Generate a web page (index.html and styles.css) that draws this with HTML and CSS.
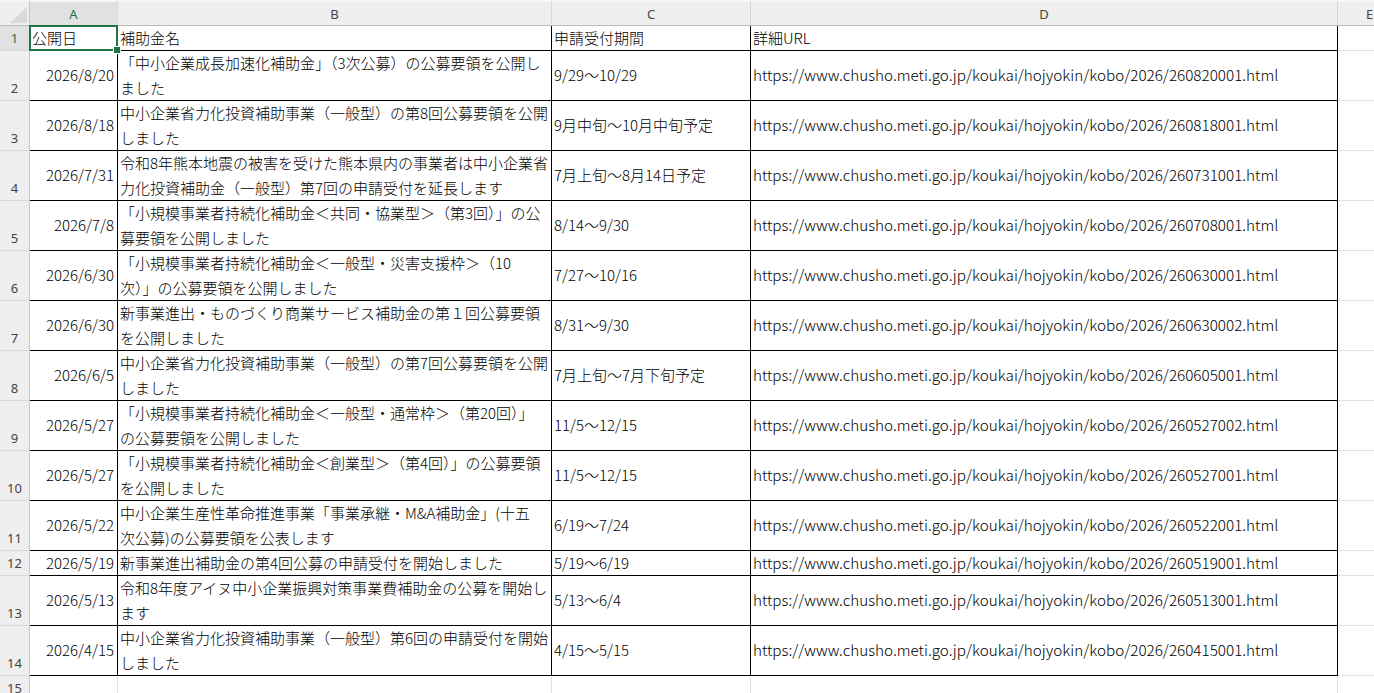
FILE: index.html
```html
<!DOCTYPE html>
<html lang="ja">

<head>
  <meta charset="UTF-8">
  <meta name="viewport" content="width=device-width, initial-scale=1.0">
  <title>補助金公募一覧</title>
  <link rel="stylesheet" href="styles.css">
</head>

<body>
  <div class="sheet">
    <!-- column headers -->
    <div class="hd corner">
      <svg class="corner-tri" width="30" height="26" viewBox="0 0 30 26"><polygon points="10,23 27,23 27,7" fill="#dadada"/></svg>
    </div>
    <div class="hd col sel-col">A</div>
    <div class="hd col">B</div>
    <div class="hd col">C</div>
    <div class="hd col">D</div>
    <div class="hd col">E</div>

    <!-- row 1 -->
    <div class="rh sel-row">1</div>
    <div class="c t a1">公開日<span class="handle"></span></div>
    <div class="c t">補助金名</div>
    <div class="c t">申請受付期間</div>
    <div class="c t">詳細URL</div>
    <div class="c"></div>

    <div class="rh">2</div>
    <div class="c t num">2026/8/20</div>
    <div class="c t wrap">「中小企業成長加速化補助金」（3次公募）の公募要領を公開し<br>ました</div>
    <div class="c t">9/29～10/29</div>
    <div class="c t url">https://www.chusho.meti.go.jp/koukai/hojyokin/kobo/2026/260820001.html</div>
    <div class="c"></div>

    <div class="rh">3</div>
    <div class="c t num">2026/8/18</div>
    <div class="c t wrap">中小企業省力化投資補助事業（一般型）の第8回公募要領を公開<br>しました</div>
    <div class="c t">9月中旬～10月中旬予定</div>
    <div class="c t url">https://www.chusho.meti.go.jp/koukai/hojyokin/kobo/2026/260818001.html</div>
    <div class="c"></div>

    <div class="rh">4</div>
    <div class="c t num">2026/7/31</div>
    <div class="c t wrap">令和8年熊本地震の被害を受けた熊本県内の事業者は中小企業省<br>力化投資補助金（一般型）第7回の申請受付を延長します</div>
    <div class="c t">7月上旬～8月14日予定</div>
    <div class="c t url">https://www.chusho.meti.go.jp/koukai/hojyokin/kobo/2026/260731001.html</div>
    <div class="c"></div>

    <div class="rh">5</div>
    <div class="c t num">2026/7/8</div>
    <div class="c t wrap">「小規模事業者持続化補助金＜共同・協業型＞（第3回）」の公<br>募要領を公開しました</div>
    <div class="c t">8/14～9/30</div>
    <div class="c t url">https://www.chusho.meti.go.jp/koukai/hojyokin/kobo/2026/260708001.html</div>
    <div class="c"></div>

    <div class="rh">6</div>
    <div class="c t num">2026/6/30</div>
    <div class="c t wrap">「小規模事業者持続化補助金＜一般型・災害支援枠＞（10<br>次）」の公募要領を公開しました</div>
    <div class="c t">7/27～10/16</div>
    <div class="c t url">https://www.chusho.meti.go.jp/koukai/hojyokin/kobo/2026/260630001.html</div>
    <div class="c"></div>

    <div class="rh">7</div>
    <div class="c t num">2026/6/30</div>
    <div class="c t wrap">新事業進出・ものづくり商業サービス補助金の第１回公募要領<br>を公開しました</div>
    <div class="c t">8/31～9/30</div>
    <div class="c t url">https://www.chusho.meti.go.jp/koukai/hojyokin/kobo/2026/260630002.html</div>
    <div class="c"></div>

    <div class="rh">8</div>
    <div class="c t num">2026/6/5</div>
    <div class="c t wrap">中小企業省力化投資補助事業（一般型）の第7回公募要領を公開<br>しました</div>
    <div class="c t">7月上旬～7月下旬予定</div>
    <div class="c t url">https://www.chusho.meti.go.jp/koukai/hojyokin/kobo/2026/260605001.html</div>
    <div class="c"></div>

    <div class="rh">9</div>
    <div class="c t num">2026/5/27</div>
    <div class="c t wrap">「小規模事業者持続化補助金＜一般型・通常枠＞（第20回）」<br>の公募要領を公開しました</div>
    <div class="c t">11/5～12/15</div>
    <div class="c t url">https://www.chusho.meti.go.jp/koukai/hojyokin/kobo/2026/260527002.html</div>
    <div class="c"></div>

    <div class="rh">10</div>
    <div class="c t num">2026/5/27</div>
    <div class="c t wrap">「小規模事業者持続化補助金＜創業型＞（第4回）」の公募要領<br>を公開しました</div>
    <div class="c t">11/5～12/15</div>
    <div class="c t url">https://www.chusho.meti.go.jp/koukai/hojyokin/kobo/2026/260527001.html</div>
    <div class="c"></div>

    <div class="rh">11</div>
    <div class="c t num">2026/5/22</div>
    <div class="c t wrap">中小企業生産性革命推進事業「事業承継・M&amp;A補助金」(十五<br>次公募)の公募要領を公表します</div>
    <div class="c t">6/19～7/24</div>
    <div class="c t url">https://www.chusho.meti.go.jp/koukai/hojyokin/kobo/2026/260522001.html</div>
    <div class="c"></div>

    <div class="rh">12</div>
    <div class="c t num">2026/5/19</div>
    <div class="c t">新事業進出補助金の第4回公募の申請受付を開始しました</div>
    <div class="c t">5/19～6/19</div>
    <div class="c t url">https://www.chusho.meti.go.jp/koukai/hojyokin/kobo/2026/260519001.html</div>
    <div class="c"></div>

    <div class="rh">13</div>
    <div class="c t num">2026/5/13</div>
    <div class="c t wrap">令和8年度アイヌ中小企業振興対策事業費補助金の公募を開始し<br>ます</div>
    <div class="c t">5/13～6/4</div>
    <div class="c t url">https://www.chusho.meti.go.jp/koukai/hojyokin/kobo/2026/260513001.html</div>
    <div class="c"></div>

    <div class="rh">14</div>
    <div class="c t num">2026/4/15</div>
    <div class="c t wrap">中小企業省力化投資補助事業（一般型）第6回の申請受付を開始<br>しました</div>
    <div class="c t">4/15～5/15</div>
    <div class="c t url">https://www.chusho.meti.go.jp/koukai/hojyokin/kobo/2026/260415001.html</div>
    <div class="c"></div>

    <div class="rh">15</div>
    <div class="c"></div>
    <div class="c"></div>
    <div class="c"></div>
    <div class="c"></div>
    <div class="c"></div>
  </div>
</body>

</html>
```

FILE: styles.css
```css
html, body {
  margin: 0;
  padding: 0;
  background: #ffffff;
  overflow: hidden;
}

body {
  font-family: "Noto Sans CJK JP", "Noto Sans", sans-serif;
  font-size: 15px;
  font-weight: 300;
  color: #000;
}

/* header row, row 1, rows 2-11, row 12, rows 13-14, row 15 */
.sheet {
  display: grid;
  grid-template-columns: 30px 88px 434px 199px 587px 64px;
  grid-template-rows: 26px 25px repeat(10, 50px) 25px 50px 50px 25px;
  width: 1402px;
}

/* header strip */
.hd {
  box-sizing: border-box;
  background: #efefef;
  border-top: 2px solid #f7f7f7;
  border-bottom: 1px solid #b9b9b9;
  border-right: 1px solid #d6d6d6;
}

.corner {
  position: relative;
  border-right: 1px solid #c6c6c6;
}

.corner-tri {
  position: absolute;
  left: 0;
  top: -2px;
}

.col {
  display: flex;
  align-items: center;
  justify-content: center;
  font-family: "Noto Sans", "Noto Sans CJK JP", sans-serif;
  font-size: 13px;
  font-weight: 400;
  color: #444;
}

.sel-col {
  background: #e1e1e1;
  color: #217346;
}

/* row numbers */
.rh {
  box-sizing: border-box;
  background: #efefef;
  border-right: 1px solid #c6c6c6;
  border-bottom: 1px solid #d9d9d9;
  display: flex;
  align-items: flex-end;
  justify-content: center;
  padding-bottom: 3px;
  font-family: "Noto Sans", "Noto Sans CJK JP", sans-serif;
  font-size: 13px;
  font-weight: 400;
  color: #444;
}

.sel-row {
  background: #e1e1e1;
  color: #217346;
}

/* cells */
.c {
  box-sizing: border-box;
  border-right: 1px solid #e1e1e1;
  border-bottom: 1px solid #e1e1e1;
  white-space: nowrap;
  overflow: hidden;
}

.c.t {
  border-right-color: #000;
  border-bottom-color: #000;
  display: flex;
  align-items: center;
  padding-left: 2px;
  padding-bottom: 2px;
  line-height: 25px;
}

.c.wrap {
  display: block;
  padding-bottom: 0;
  line-height: 25px;
  margin-top: -1px;
}

.c.num {
  justify-content: flex-end;
  padding-left: 0;
  padding-right: 3px;
}

.c.url {
  font-size: 15.25px;
}

/* active cell */
.a1 {
  position: relative;
  overflow: visible;
}

.a1::after {
  content: "";
  position: absolute;
  left: -1px;
  top: -1px;
  right: -1px;
  bottom: -1px;
  border: 2px solid #217346;
  pointer-events: none;
}

.handle {
  position: absolute;
  right: -4px;
  bottom: -4px;
  width: 6px;
  height: 6px;
  background: #217346;
  border: 1px solid #fff;
  z-index: 2;
}
```
